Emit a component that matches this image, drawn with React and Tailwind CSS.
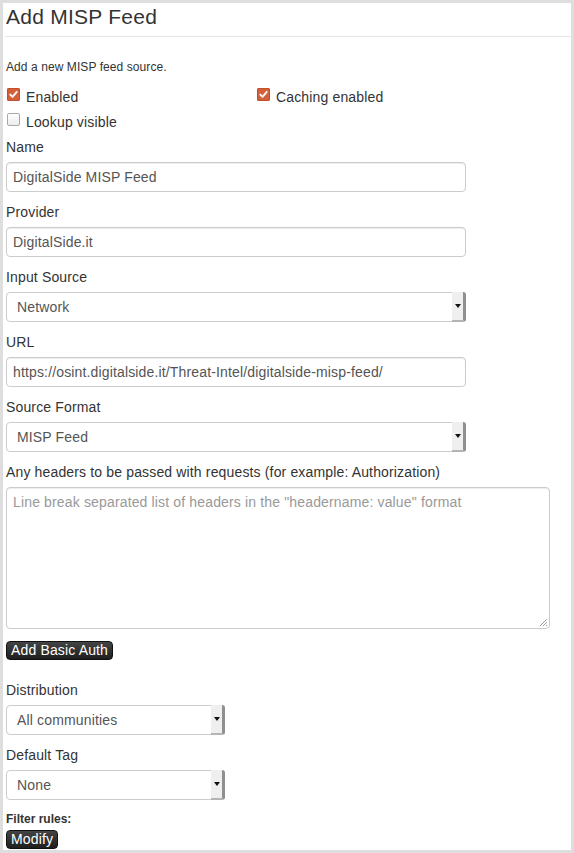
import React from "react";

function CheckBox({ checked }) {
  if (checked) {
    return (
      <span className="mt-[1px] inline-flex h-[13px] w-[13px] shrink-0 items-center justify-center rounded-[2px] bg-[#d4603a] shadow-[inset_0_0_0_1px_#c0502c]">
        <svg width="11" height="11" viewBox="0 0 11 11">
          <path d="M2.3 5.6 L4.5 7.8 L8.8 2.9" fill="none" stroke="#fff" strokeWidth="1.9" strokeLinecap="round" strokeLinejoin="round" />
        </svg>
      </span>
    );
  }
  return (
    <span className="mt-[1px] inline-block h-[13px] w-[13px] shrink-0 rounded-[2px] border border-[#a9a9a9] bg-gradient-to-b from-[#ffffff] to-[#ececec]" />
  );
}

function Label({ children, mt = "mt-[10px]" }) {
  return <div className={`${mt} h-[20px] text-[14px] leading-[20px]`}>{children}</div>;
}

function TextInput({ value, w = "w-[460px]" }) {
  return (
    <div className={`mt-[5px] ${w} h-[30px] rounded-[4px] border border-[#cccccc] bg-white px-[6px] text-[14px] leading-[28px] text-[#555] shadow-[inset_0_1px_1px_rgba(0,0,0,0.075)]`}>
      {value}
    </div>
  );
}

function Select({ value, w = "w-[460px]" }) {
  return (
    <div className={`mt-[5px] ${w} relative flex h-[30px] rounded-[4px] border border-[#cccccc] bg-white text-[14px] leading-[28px] text-[#555]`}>
      <div className="flex-1 pl-[10px]">{value}</div>
      <div className="mr-[-1px] mt-[-1px] flex h-[30px] w-[14px] items-center justify-center rounded-r-[3px] border-b-[2px] border-r-[3px] border-b-[#b4b4b4] border-r-[#8f8f8f] bg-[#efefef] pb-[1px]">
        <span className="block h-0 w-0 border-l-[3px] border-r-[3px] border-t-[4px] border-l-transparent border-r-transparent border-t-[#111]" />
      </div>
    </div>
  );
}

function DarkButton({ children }) {
  return (
    <div className="flex h-[19px] w-fit items-center rounded-[4px] border border-[#111] bg-gradient-to-b from-[#444] to-[#1f1f1f] px-[4px] text-[14px] leading-[17px] text-white">
      {children}
    </div>
  );
}

export default function App() {
  return (
    <div className="h-[853px] w-[574px] bg-[#dedede] p-[3px] font-['Liberation_Sans',Arial,sans-serif] tracking-[0.15px] text-[#333]">
      <div className="h-full bg-white pl-[3px]">
        <div className="pt-[2px]">
          <div className="h-[24px] text-[21px] leading-[24px] tracking-[0.25px]">Add MISP Feed</div>
        </div>
        <div className="ml-[-1px] mt-[7px] h-px bg-[#e6e6e6]" />
        <div className="mt-[22px] h-[16px] text-[12px] leading-[16px] tracking-[0.08px]">Add a new MISP feed source.</div>

        <div className="mt-[12px] flex h-[20px] text-[14px] leading-[20px]">
          <div className="flex w-[251px] items-start pl-[1px]">
            <CheckBox checked />
            <span className="ml-[6px]">Enabled</span>
          </div>
          <div className="flex items-start">
            <CheckBox checked />
            <span className="ml-[6px]">Caching enabled</span>
          </div>
        </div>
        <div className="mt-[5px] flex h-[20px] items-start pl-[1px] text-[14px] leading-[20px]">
          <CheckBox />
          <span className="ml-[6px]">Lookup visible</span>
        </div>

        <Label mt="mt-[5px]">Name</Label>
        <TextInput value="DigitalSide MISP Feed" />

        <Label>Provider</Label>
        <TextInput value="DigitalSide.it" />

        <Label>Input Source</Label>
        <Select value="Network" />

        <Label>URL</Label>
        <TextInput value="https://osint.digitalside.it/Threat-Intel/digitalside-misp-feed/" />

        <Label>Source Format</Label>
        <Select value="MISP Feed" />

        <Label>Any headers to be passed with requests (for example: Authorization)</Label>
        <div className="relative mt-[5px] h-[142px] w-[544px] rounded-[4px] border border-[#cccccc] bg-white px-[6px] pt-[4px] text-[14px] leading-[20px] text-[#999] shadow-[inset_0_1px_1px_rgba(0,0,0,0.075)]">
          Line break separated list of headers in the "headername: value" format
          <svg className="absolute bottom-[1px] right-[1px]" width="10" height="10" viewBox="0 0 10 10">
            <path d="M9 2 L2 9 M9 5 L5 9 M9 8 L8 9" stroke="#9a9a9a" strokeWidth="1" fill="none" />
          </svg>
        </div>

        <div className="mt-[12px]">
          <DarkButton>Add Basic Auth</DarkButton>
        </div>

        <Label mt="mt-[20px]">Distribution</Label>
        <Select value="All communities" w="w-[219px]" />

        <Label>Default Tag</Label>
        <Select value="None" w="w-[219px]" />

        <div className="mt-[12px] h-[14px] text-[12px] font-bold leading-[14px] tracking-normal">Filter rules:</div>
        <div className="mt-[4px]">
          <DarkButton>Modify</DarkButton>
        </div>
      </div>
    </div>
  );
}
